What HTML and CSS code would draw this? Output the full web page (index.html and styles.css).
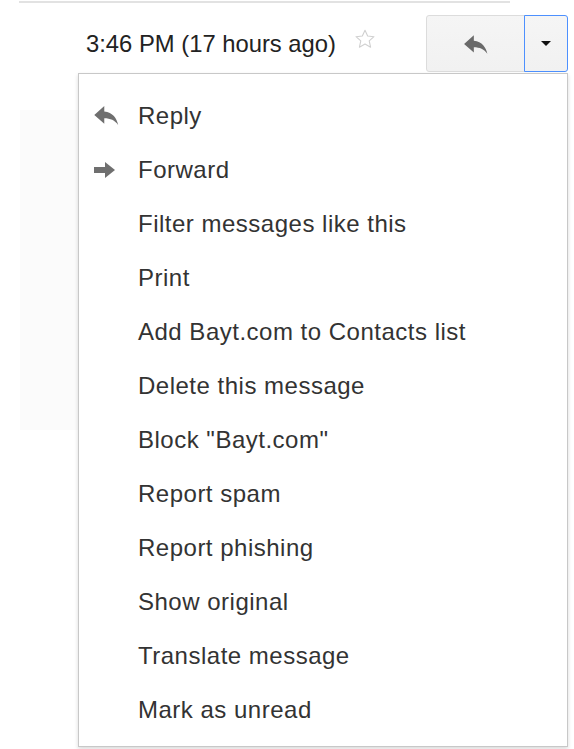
FILE: index.html
```html
<!DOCTYPE html>
<html lang="en">
<head>
<meta charset="utf-8">
<title>Message actions</title>
<link rel="stylesheet" href="styles.css">
</head>
<body>
<div class="page">
  <div class="rule"></div>
  <div class="header">
    <span class="date">3:46 PM (17 hours ago)</span>
    <svg class="star" viewBox="0 0 24 24" aria-hidden="true">
      <path d="M12 2.5l2.9 6.3 6.9.7-5.2 4.6 1.5 6.8L12 17.4l-6.1 3.5 1.5-6.8-5.2-4.6 6.9-.7z"/>
    </svg>
    <div class="btn-group">
      <button class="btn btn-reply" type="button" aria-label="Reply">
        <svg viewBox="0 0 24 18" aria-hidden="true"><path d="M10 5V0L1 8l9 8v-5c5.5 0 9.5 1.8 12.5 6-1.2-5.7-4.8-11.2-12.5-12z"/></svg>
      </button>
      <button class="btn btn-more" type="button" aria-label="More">
        <span class="caret"></span>
      </button>
    </div>
  </div>
  <div class="body-shade"></div>

  <ul class="menu">
    <li class="item">
      <svg class="ico ico-reply" viewBox="0 0 24 18" aria-hidden="true"><path d="M10 5V0L1 8l9 8v-5c5.5 0 9.5 1.8 12.5 6-1.2-5.7-4.8-11.2-12.5-12z"/></svg>
      Reply
    </li>
    <li class="item">
      <svg class="ico ico-fwd" viewBox="0 0 22 16" aria-hidden="true"><path d="M0 5h11V0l10 8-10 8v-5H0z"/></svg>
      Forward
    </li>
    <li class="item">Filter messages like this</li>
    <li class="item">Print</li>
    <li class="item">Add Bayt.com to Contacts list</li>
    <li class="item">Delete this message</li>
    <li class="item">Block "Bayt.com"</li>
    <li class="item">Report spam</li>
    <li class="item">Report phishing</li>
    <li class="item">Show original</li>
    <li class="item">Translate message</li>
    <li class="item">Mark as unread</li>
  </ul>
</div>
</body>
</html>
```

FILE: styles.css
```css
html, body {
  margin: 0;
  padding: 0;
  background: #fff;
}

.page {
  position: relative;
  width: 574px;
  height: 749px;
  overflow: hidden;
  font-family: "Liberation Sans", Arial, Helvetica, sans-serif;
  color: #222;
}

.rule {
  margin: 1px 0 0 19px;
  width: 491px;
  height: 2px;
  background: #e2e2e2;
}

.header {
  display: flex;
  align-items: center;
  justify-content: flex-end;
  padding: 12px 6px 0 0;
  height: 57px;
}

.date {
  font-size: 23.8px;
  color: #222;
  margin-right: 18px;
}

.star {
  width: 22px;
  height: 22px;
  fill: none;
  stroke: #d0d0d0;
  stroke-width: 1.2;
  stroke-linejoin: round;
  margin-right: 50px;
  position: relative;
  top: -5px;
}

.btn-group {
  display: flex;
  height: 57px;
}

.btn {
  display: flex;
  align-items: center;
  justify-content: center;
  margin: 0;
  padding: 0;
  height: 57px;
  background: linear-gradient(#f5f5f5, #f1f1f1);
  border: 1px solid #dcdcdc;
  box-sizing: border-box;
}

.btn-reply {
  width: 99px;
  border-radius: 3px 0 0 3px;
}

.btn-reply svg {
  width: 26px;
  height: 20px;
  fill: #6a6a6a;
  position: relative;
  top: 1px;
}

.btn-more {
  width: 44px;
  margin-left: -1px;
  border: 1px solid #4d90fe;
  border-radius: 0 3px 3px 0;
}

.caret {
  width: 0;
  height: 0;
  border-left: 5px solid transparent;
  border-right: 5px solid transparent;
  border-top: 5px solid #111;
}

/* faint message body behind the open menu */
.body-shade {
  margin: 38px 0 0 20px;
  width: 120px;
  height: 320px;
  background: #fbfbfb;
}

.menu {
  position: absolute;
  left: 78px;
  top: 73px;
  width: 490px;
  height: 674px;
  box-sizing: border-box;
  margin: 0;
  padding: 15px 0 10px;
  list-style: none;
  background: #fff;
  border: 1px solid #c8c8c8;
  box-shadow: 0 2px 4px rgba(0, 0, 0, 0.15);
}

.item {
  position: relative;
  display: flex;
  align-items: center;
  height: 54px;
  padding-left: 59px;
  font-size: 24px;
  letter-spacing: 0.5px;
  color: #333;
}

.ico {
  position: absolute;
  fill: #6f6f6f;
}

.ico-reply {
  left: 14px;
  top: 17px;
  width: 27px;
  height: 20px;
}

.ico-fwd {
  left: 15px;
  top: 19px;
  width: 22px;
  height: 16px;
}
```
